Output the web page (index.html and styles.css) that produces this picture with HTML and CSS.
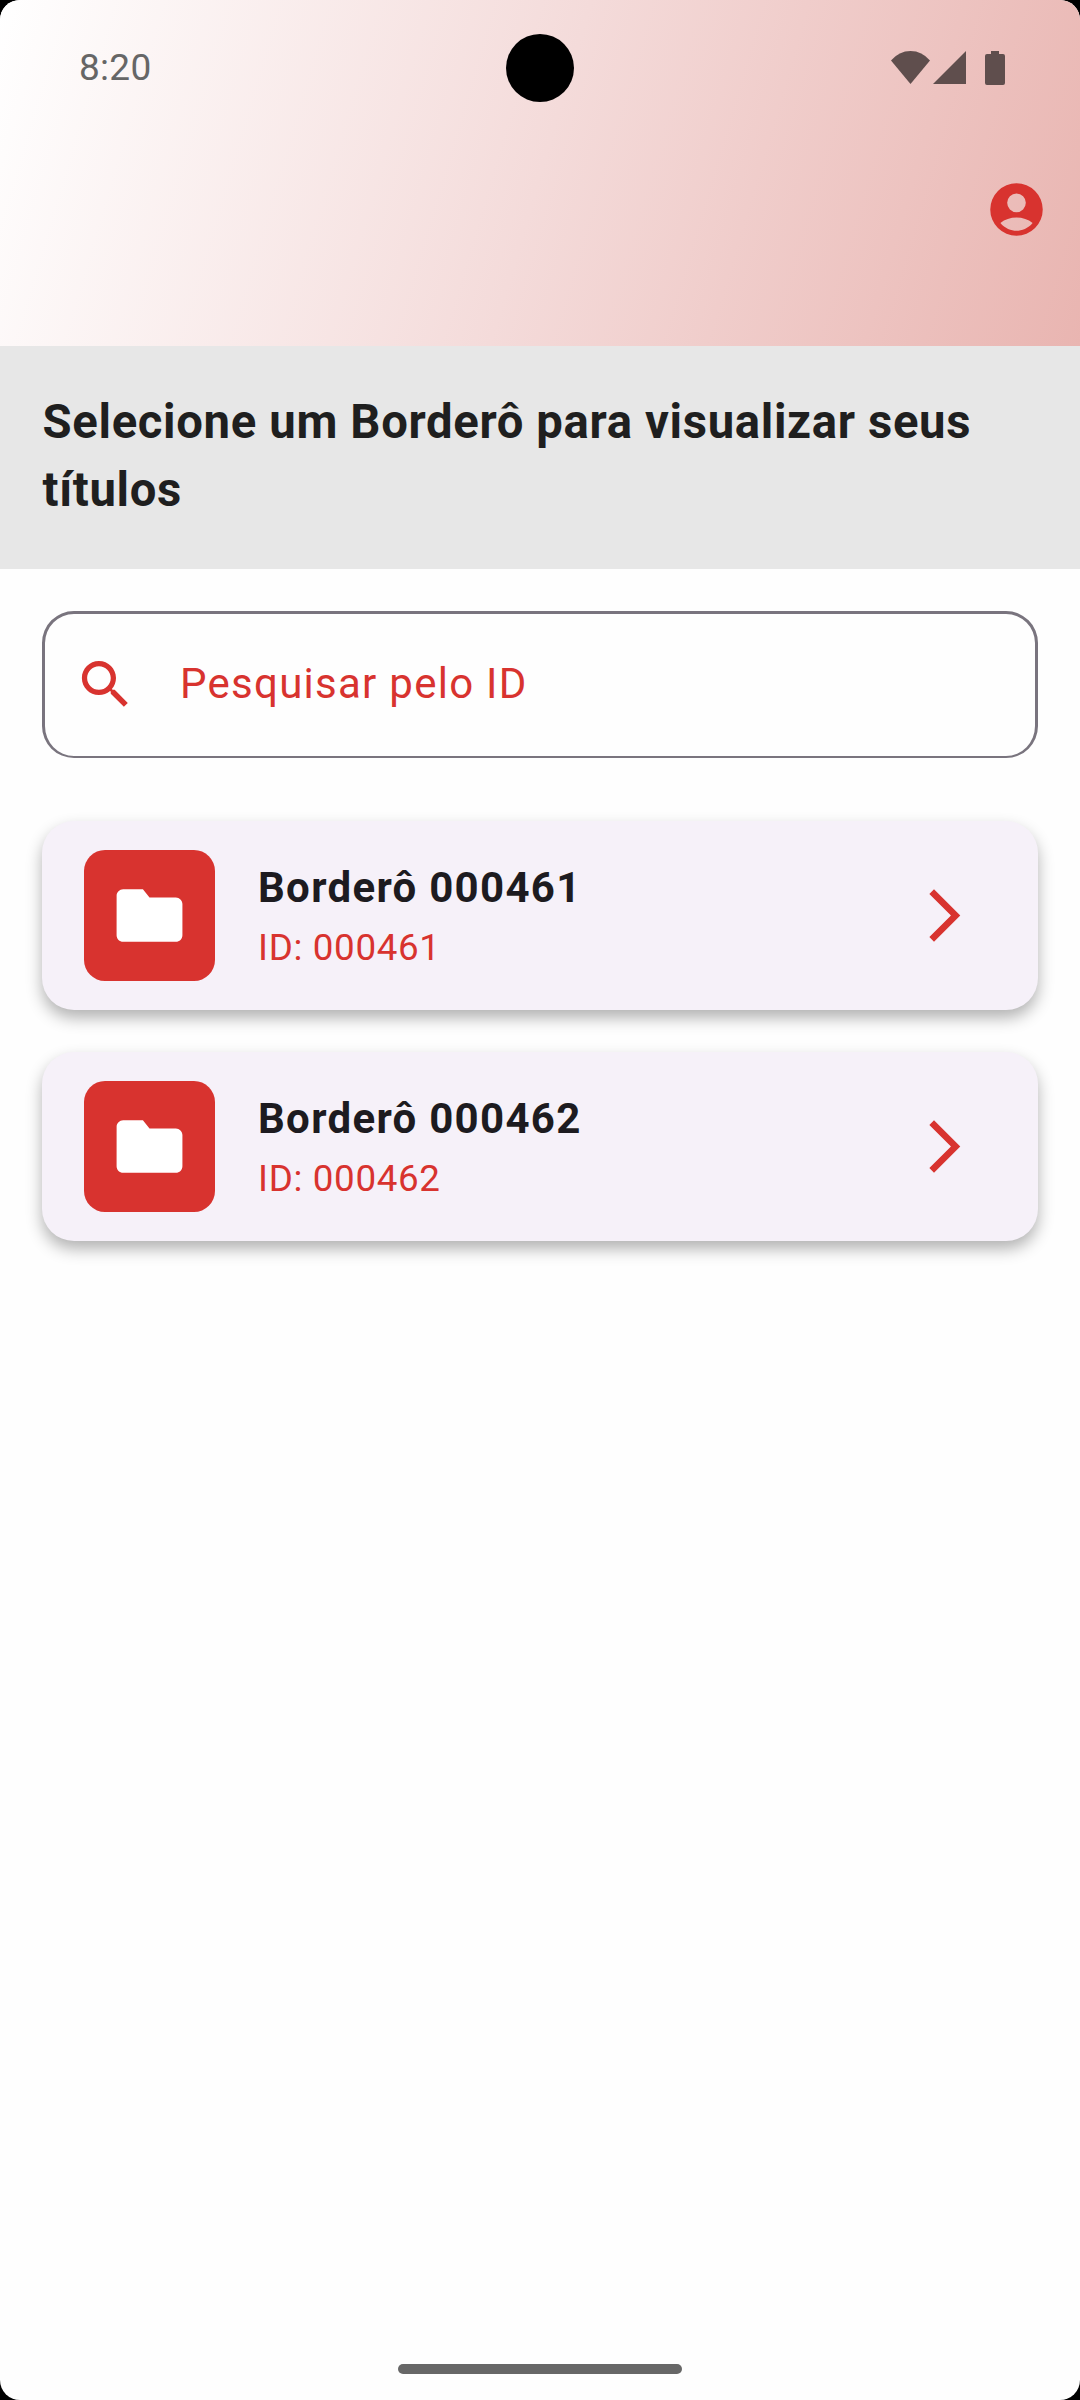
FILE: index.html
```html
<!DOCTYPE html>
<html lang="pt-BR">
<head>
<meta charset="utf-8">
<title>Borderôs</title>
<link rel="stylesheet" href="styles.css">
</head>
<body>
<div class="screen">
  <header class="top">
    <div class="status">
      <span class="clock">8:20</span>
      <div class="status-icons">
        <svg class="wifi" viewBox="0 0 39 33"><path d="M0 9.500Q8 0 19.500 0T39 9.500L19.500 33Z"/></svg>
        <svg class="signal" viewBox="0 0 33 33"><path d="M33 0V33H0Z"/></svg>
        <svg class="battery" viewBox="0 0 20 34"><path d="M6 0h8v3h4a2 2 0 0 1 2 2v27a2 2 0 0 1-2 2H2a2 2 0 0 1-2-2V5a2 2 0 0 1 2-2h4z"/></svg>
      </div>
    </div>
    <div class="camera"></div>
    <div class="appbar">
      <svg class="account" viewBox="0 0 24 24"><path fill-rule="evenodd" d="M12 2a10 10 0 1 0 0 20 10 10 0 0 0 0-20zM12 5.900a3.550 3.550 0 1 1 0 7.100 3.550 3.550 0 0 1 0-7.100zM5.860 17.120C7.550 15.700 9.680 15 12 15s4.450.7 6.140 2.120C16.430 19.180 14.030 20.100 12 20.100s-4.430-.92-6.140-2.980z"/></svg>
    </div>
  </header>
  <h1 class="heading">Selecione um Borderô para visualizar seus títulos</h1>
  <main class="content">
    <div class="search">
      <svg class="search-icon" viewBox="0 0 24 24"><path d="M15.500 14h-.79l-.28-.27C15.410 12.590 16 11.110 16 9.500 16 5.910 13.090 3 9.500 3S3 5.910 3 9.500 5.910 16 9.500 16c1.610 0 3.090-.59 4.230-1.570l.27.28v.79l5 4.990L20.490 19l-4.990-5zm-6 0C7.010 14 5 11.990 5 9.500S7.010 5 9.500 5 14 7.010 14 9.500 11.990 14 9.500 14z"/></svg>
      <span class="placeholder">Pesquisar pelo ID</span>
    </div>
    <article class="card">
      <div class="tile"><svg class="folder" viewBox="0 0 24 24"><path d="M10 4H4c-1.100 0-1.990.9-1.990 2L2 18c0 1.100.9 2 2 2h16c1.100 0 2-.9 2-2V8.500c0-1.100-.9-2-2-2h-8z"/></svg></div>
      <div class="info"><h2 class="name">Borderô 000461</h2><p class="id">ID: 000461</p></div>
      <svg class="chevron" viewBox="0 0 24 24"><path d="M6.230 20.230 8 22l10-10L8 2 6.230 3.770 14.460 12z"/></svg>
    </article>
    <article class="card">
      <div class="tile"><svg class="folder" viewBox="0 0 24 24"><path d="M10 4H4c-1.100 0-1.990.9-1.990 2L2 18c0 1.100.9 2 2 2h16c1.100 0 2-.9 2-2V8.500c0-1.100-.9-2-2-2h-8z"/></svg></div>
      <div class="info"><h2 class="name">Borderô 000462</h2><p class="id">ID: 000462</p></div>
      <svg class="chevron" viewBox="0 0 24 24"><path d="M6.230 20.230 8 22l10-10L8 2 6.230 3.770 14.460 12z"/></svg>
    </article>
  </main>
  <div class="home-bar"></div>
</div>
</body>
</html>
```
FILE: styles.css
```css
* { box-sizing: border-box; }
body { margin: 0; background: #000; font-family: Roboto, sans-serif; }
h1, h2, p { margin: 0; }
svg { display: block; flex: none; }
.screen {
  display: flex;
  flex-direction: column;
  width: 1080px;
  height: 2400px;
  border-radius: 20px;
  overflow: hidden;
  background: #fefefe;
}
.top {
  position: relative;
  height: 346px;
  background: linear-gradient(106.5deg, #fff 0%, #f4dbda 50%, #e9b5b1 100%);
}
.status {
  display: flex;
  justify-content: space-between;
  align-items: center;
  height: 136px;
  padding: 0 75px 0 79px;
}
.clock { font-size: 37px; line-height: 44px; letter-spacing: 0.3px; color: #666; }
.status-icons { display: flex; fill: #5f4e4d; }
.wifi { width: 39px; height: 33px; }
.signal { width: 33px; height: 33px; margin-left: 3px; }
.battery { width: 20px; height: 34px; margin-left: 19px; }
.camera {
  position: absolute;
  left: 506px;
  top: 34px;
  width: 68px;
  height: 68px;
  border-radius: 50%;
  background: #000;
}
.appbar { display: flex; justify-content: flex-end; padding: 42px 32px 0 0; }
.account { width: 63px; height: 63px; fill: #d8332f; }
.heading {
  height: 223px;
  padding: 42px 42px 0 42.6px;
  background: #e7e7e7;
  color: #1f1f1f;
  font-size: 47.25px;
  font-weight: 700;
  line-height: 68px;
  letter-spacing: 0.65px;
}
.content { flex: 1; padding: 42px; }
.search {
  display: flex;
  align-items: center;
  gap: 43px;
  height: 147px;
  margin-bottom: 63px;
  padding: 0 0 1px 29px;
  border: 3px solid #79747e;
  border-bottom-width: 2px;
  border-radius: 32px;
  color: #d8332f;
  font-size: 42px;
  letter-spacing: 1.27px;
}
.placeholder { padding-bottom: 2px; }
.search-icon { width: 63px; height: 63px; fill: #d8332f; }
.card {
  display: flex;
  align-items: center;
  height: 189px;
  margin-bottom: 42px;
  padding: 0 62px 0 42px;
  border-radius: 32px;
  background: #f6f1f9;
  box-shadow: 0 8px 16px rgba(0, 0, 0, 0.3);
}
.tile {
  display: flex;
  align-items: center;
  justify-content: center;
  width: 131px;
  height: 131px;
  border-radius: 21px;
  background: #d8332f;
}
.folder { width: 79px; height: 79px; fill: #fff; }
.info { flex: 1; margin-left: 43px; padding-bottom: 1px; }
.name { color: #1d1b20; font-size: 42px; line-height: 63px; letter-spacing: 1.31px; }
.id { margin-top: 2px; color: #d8332f; font-size: 36.75px; line-height: 53px; letter-spacing: 0.66px; }
.chevron { width: 63px; height: 63px; fill: #d8332f; }
.home-bar {
  align-self: center;
  width: 284px;
  height: 10px;
  margin-bottom: 26px;
  border-radius: 5px;
  background: #676767;
}
```
